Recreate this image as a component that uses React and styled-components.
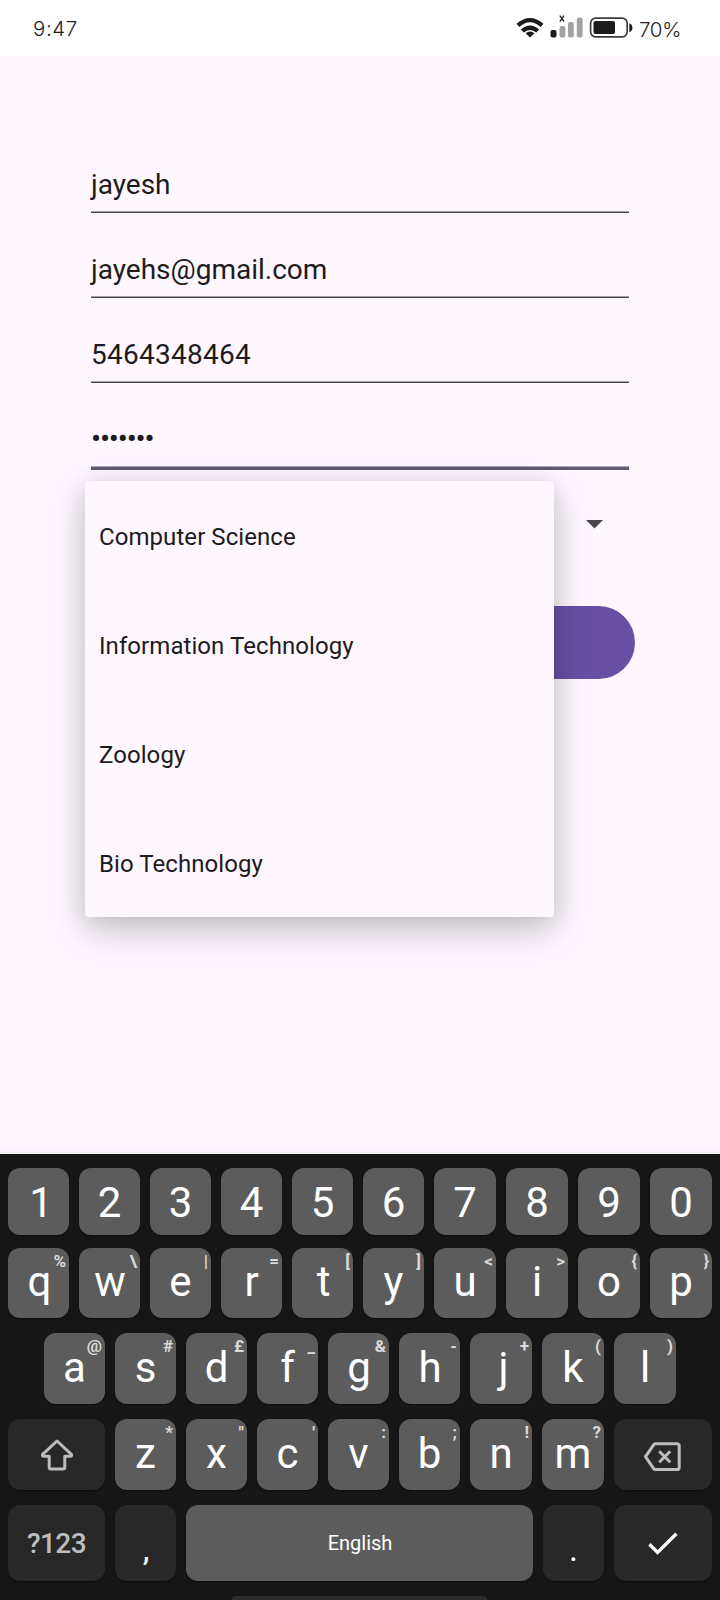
import React from "react";
import styled, { createGlobalStyle } from "styled-components";

const GlobalStyle = createGlobalStyle`
  *, *::before, *::after { box-sizing: border-box; }
  body { margin: 0; background: #fef7ff; }
`;

const Screen = styled.div`
  position: relative;
  width: 720px;
  height: 1600px;
  overflow: hidden;
  display: flex;
  flex-direction: column;
  background: #fef7ff;
  font-family: Roboto, "Liberation Sans", sans-serif;
  color: #1d1b20;
`;

const StatusBar = styled.header`
  display: flex;
  height: 56px;
  padding: 0 40px 0 33px;
  background: #fff;
  font-family: Inter, Roboto, sans-serif;
  font-weight: 350;
  color: #1c1c1c;
`;

const Clock = styled.div`
  flex: 1;
  font-size: 20.5px;
  line-height: 57px;
  letter-spacing: 0.6px;
`;

const StatusIcons = styled.svg`
  display: block;
  width: 120px;
  height: 56px;
`;

const Percent = styled.div`
  width: 42px;
  margin-left: 3px;
  padding-left: 1px;
  font-size: 20.5px;
  line-height: 59px;
  letter-spacing: -0.3px;
  white-space: nowrap;
`;

const Content = styled.main`
  position: relative;
  flex: 1;
  padding-top: 85px;
`;

const Field = styled.div`
  display: flex;
  flex-direction: column;
  justify-content: flex-end;
  width: 538px;
  height: 85px;
  margin-left: 91px;
`;

const FieldText = styled.div`
  height: 45px;
  font-size: 28px;
  line-height: 37px;
  letter-spacing: ${(p) => (p.$numeric ? "0.25px" : "0")};
  white-space: nowrap;
`;

const PasswordText = styled(FieldText)`
  font-size: 30px;
  line-height: 36px;
  letter-spacing: -1.2px;
`;

const Underline = styled.div`
  height: ${(p) => (p.$active ? 4 : 2)}px;
  margin-bottom: ${(p) => (p.$active ? 11 : 13)}px;
  background: ${(p) => (p.$active ? "#625b71" : "#49454f")};
  border-top: 1px solid ${(p) => (p.$active ? "#aaa4b4" : "#a39fa9")};
`;

const Spinner = styled.div`
  display: flex;
  justify-content: flex-end;
  padding: 39px 117px 0 0;
  height: 125px;
`;

const Caret = styled.svg`
  width: 17px;
  height: 9px;
`;

const SubmitButton = styled.div`
  width: 550px;
  height: 73px;
  margin-left: 85px;
  border-radius: 37px;
  background: #6750a4;
`;

const Menu = styled.ul`
  position: absolute;
  left: 85px;
  top: 425px;
  width: 469px;
  margin: 0;
  padding: 0;
  list-style: none;
  border-radius: 4px;
  background: #fef7ff;
  box-shadow: 0 13px 38px rgba(0, 0, 0, 0.22), 0 2px 22px rgba(0, 0, 0, 0.08);
`;

const MenuItem = styled.li`
  height: 109px;
  padding-left: 14px;
  font-size: 24px;
  line-height: 113px;
  letter-spacing: 0.07px;
`;

const Keyboard = styled.section`
  position: relative;
  display: flex;
  flex-direction: column;
  height: 446px;
  padding: 14px 8px 0;
  background: #161616;
  box-shadow: 0 -1px 6px rgba(0, 0, 0, 0.07);
`;

const KeyRow = styled.div`
  display: flex;
  flex-shrink: 0;
  gap: 10px;
  height: ${(p) => p.$height}px;
  margin: 0 ${(p) => p.$inset || 0}px ${(p) => p.$after}px;
`;

const Key = styled.div`
  position: relative;
  display: flex;
  justify-content: center;
  align-items: ${(p) => (p.$middle ? "center" : "flex-start")};
  flex: 0 0 ${(p) => p.$width}px;
  height: 100%;
  border-radius: 12px;
  background: ${(p) => (p.$dark ? "#282828" : "#5c5c5c")};
  box-shadow: 0 1px 1px #0d0d0d;
  color: #fff;
`;

const KeyLabel = styled.span`
  padding-left: ${(p) => p.$shift || 0}px;
  font-size: ${(p) => p.$size || 42}px;
  line-height: ${(p) => p.$line}px;
`;

const Hint = styled.span`
  position: absolute;
  top: 0;
  right: 3px;
  font-size: 17px;
  font-weight: 700;
  line-height: 27px;
  color: #dadada;
`;

const ModeLabel = styled.span`
  font-size: 28px;
  font-weight: 500;
  line-height: 77px;
  letter-spacing: -0.6px;
  color: #bdbdbd;
`;

const SpaceLabel = styled.span`
  padding-left: 1px;
  font-size: 20px;
  line-height: 76px;
`;

const KeyIcon = styled.svg`
  width: 40px;
  height: 40px;
  fill: none;
`;

const NavHandle = styled.div`
  flex-shrink: 0;
  width: 255px;
  height: 8px;
  margin-left: 224px;
  border-radius: 4px;
  background: #2b2b2b;
`;

const fields = [
  { value: "jayesh" },
  { value: "jayehs@gmail.com" },
  { value: "5464348464", numeric: true },
];

const courses = ["Computer Science", "Information Technology", "Zoology", "Bio Technology"];

const digits = "1234567890".split("");
const topRow = [
  ["q", "%"], ["w", "\\"], ["e", "|"], ["r", "="], ["t", "["],
  ["y", "]"], ["u", "<"], ["i", ">"], ["o", "{"], ["p", "}"],
];
const homeRow = [
  ["a", "@"], ["s", "#"], ["d", "£"], ["f", "_"], ["g", "&"],
  ["h", "-"], ["j", "+"], ["k", "("], ["l", ")"],
];
const bottomRow = [
  ["z", "*"], ["x", '"'], ["c", "'"], ["v", ":"], ["b", ";"], ["n", "!"], ["m", "?"],
];

// Optical centring for glyphs whose ink sits left of their advance box.
const opticalShift = { 1: 5, j: 5, q: 2, t: 2, w: 1, g: 1, h: 1 };

function LetterKey({ label, hint, width, line }) {
  return (
    <Key $width={width}>
      <KeyLabel $line={line} $shift={opticalShift[label]}>{label}</KeyLabel>
      {hint && <Hint>{hint}</Hint>}
    </Key>
  );
}

function Indicators() {
  return (
    <StatusIcons viewBox="515 0 120 56">
      <g fill="none" stroke="#1c1c1c" strokeWidth="4.2">
        <path d="M517.9 25.4 Q530 14.8 542.1 25.4" />
        <path d="M522.3 31 Q530 24.4 537.7 31" />
      </g>
      <path d="M525.5 33.3 Q530 29.6 534.5 33.3 L530 37.4Z" fill="#1c1c1c" />
      <rect x="550.5" y="30" width="6" height="7.5" rx="2" fill="#1c1c1c" />
      <g fill="#a3a3a3">
        <rect x="559.5" y="26" width="5.8" height="11.5" rx="2" />
        <rect x="568" y="22" width="5.8" height="15.5" rx="2" />
        <rect x="576.8" y="17.5" width="5.8" height="20" rx="2" />
      </g>
      <path d="M559.8 15.6 L564 21.6 M564 15.6 L559.8 21.6" stroke="#1c1c1c" strokeWidth="1.3" />
      <rect x="590.6" y="18.2" width="36.6" height="18.6" rx="5" fill="none" stroke="#3c3c3c" strokeWidth="1.7" />
      <rect x="593.5" y="21" width="21.5" height="13" rx="2" fill="#1c1c1c" />
      <path d="M629.3 23.2 Q632.4 24.5 632.4 27.7 Q632.4 31 629.3 32.2Z" fill="#1c1c1c" />
    </StatusIcons>
  );
}

export default function App() {
  return (
    <Screen>
      <GlobalStyle />
      <StatusBar>
        <Clock>9:47</Clock>
        <Indicators />
        <Percent>70%</Percent>
      </StatusBar>
      <Content>
        {fields.map((f) => (
          <Field key={f.value}>
            <FieldText $numeric={f.numeric}>{f.value}</FieldText>
            <Underline />
          </Field>
        ))}
        <Field>
          <PasswordText>•••••••</PasswordText>
          <Underline $active />
        </Field>
        <Spinner>
          <Caret viewBox="0 0 17 9">
            <path d="M0 0H17L8.5 8.6Z" fill="#49454f" />
          </Caret>
        </Spinner>
        <SubmitButton />
        <Menu>
          {courses.map((c) => (
            <MenuItem key={c}>{c}</MenuItem>
          ))}
        </Menu>
      </Content>
      <Keyboard>
        <KeyRow $height={67} $after={13}>
          {digits.map((d, i) => (
            <LetterKey key={d} label={d} width={i > 5 ? 62 : 61} line={69} />
          ))}
        </KeyRow>
        <KeyRow $height={70} $after={15}>
          {topRow.map(([l, h], i) => (
            <LetterKey key={l} label={l} hint={h} width={i > 5 ? 62 : 61} line={67} />
          ))}
        </KeyRow>
        <KeyRow $height={71} $after={15} $inset={36}>
          {homeRow.map(([l, h], i) => (
            <LetterKey key={l} label={l} hint={h} width={i > 5 ? 62 : 61} line={69} />
          ))}
        </KeyRow>
        <KeyRow $height={71} $after={15}>
          <Key $width={97} $dark $middle>
            <KeyIcon viewBox="0 0 40 40" stroke="#bdbdbd" strokeWidth="3" strokeLinejoin="round">
              <path d="M20 6 L34.4 19.4 Q35.2 21.2 33.4 21.2 H27.8 V32 Q27.8 34 25.8 34 H14.2 Q12.2 34 12.2 32 V21.2 H6.6 Q4.8 21.2 5.6 19.4 Z" />
            </KeyIcon>
          </Key>
          {bottomRow.map(([l, h], i) => (
            <LetterKey key={l} label={l} hint={h} width={i > 4 ? 62 : 61} line={69} />
          ))}
          <Key $width={98} $dark $middle>
            <KeyIcon viewBox="0 0 40 40" stroke="#bdbdbd" strokeWidth="3" strokeLinejoin="round">
              <path d="M12.4 8.8 H34 Q36.2 8.8 36.2 11 V32.4 Q36.2 34.6 34 34.6 H12.4 Q11.4 34.6 10.8 33.8 L2.5 21.7 L10.8 9.6 Q11.4 8.8 12.4 8.8Z" />
              <path d="M16.2 16.2 L27.2 27.2 M27.2 16.2 L16.2 27.2" />
            </KeyIcon>
          </Key>
        </KeyRow>
        <KeyRow $height={76} $after={15}>
          <Key $width={97} $dark>
            <ModeLabel>?123</ModeLabel>
          </Key>
          <Key $width={61} $dark>
            <KeyLabel $size={34} $line={88} $shift={1}>,</KeyLabel>
          </Key>
          <Key $width={347}>
            <SpaceLabel>English</SpaceLabel>
          </Key>
          <Key $width={61} $dark>
            <KeyLabel $size={34} $line={88}>.</KeyLabel>
          </Key>
          <Key $width={98} $dark $middle>
            <KeyIcon viewBox="0 0 40 40" stroke="#fff" strokeWidth="3.4">
              <path d="M6.4 21.2 L14.6 29.4 L33.4 10.8" />
            </KeyIcon>
          </Key>
        </KeyRow>
        <NavHandle />
      </Keyboard>
    </Screen>
  );
}
